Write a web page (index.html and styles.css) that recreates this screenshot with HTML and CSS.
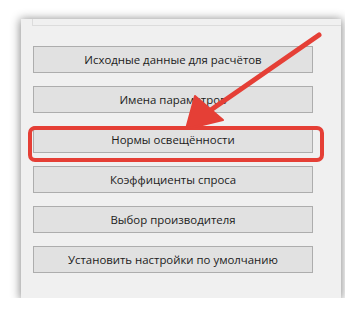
FILE: index.html
```html
<!DOCTYPE html>
<html lang="ru">
<head>
    <meta charset="UTF-8">
    <title>Настройки</title>
    <link rel="stylesheet" href="styles.css">
</head>
<body>
    <div class="window">
        <div class="groupbox"></div>
        <div class="buttons">
            <div class="btn">Исходные данные для расчётов</div>
            <div class="btn">Имена параметров</div>
            <div class="btn">Нормы освещённости</div>
            <div class="btn">Коэффициенты спроса</div>
            <div class="btn">Выбор производителя</div>
            <div class="btn">Установить настройки по умолчанию</div>
        </div>
    </div>
    <div class="highlight"></div>
    <svg class="arrow" width="345" height="319" viewBox="0 0 345 319">
        <line x1="319" y1="35" x2="205" y2="114" stroke="#e53f36" stroke-width="5" stroke-linecap="round"/>
        <polygon points="186,129 195,96 223,120" fill="#e53f36" stroke="#e53f36" stroke-width="2" stroke-linejoin="round"/>
    </svg>
</body>
</html>
```

FILE: styles.css
```css
body{
    margin: 0;
    background: #ffffff;
    font-family: "Segoe UI", "Open Sans", "Liberation Sans", sans-serif;
    font-size: 11.4px;
    color: #1b1b1b;
}

.window{
    width: 320px;
    height: 279px;
    margin: 19px 0 0 21px;
    background: #f0f0f0;
    box-shadow: 0 1px 9px 1px rgba(0,0,0,0.45);
}

.groupbox{
    height: 6px;
    margin-left: 11px;
    border-left: 1px solid #dcdcdc;
    border-bottom: 1px solid #dcdcdc;
}

.buttons{
    display: flex;
    flex-direction: column;
    gap: 13px;
    padding: 20px 0 0 12px;
}

.btn{
    width: 278px;
    height: 25px;
    line-height: 25px;
    text-align: center;
    background: #e1e1e1;
    border: 1px solid #adadad;
}

.highlight{
    position: absolute;
    left: 28px;
    top: 126px;
    width: 288px;
    height: 28px;
    border: 4px solid #e53f36;
    border-radius: 7px;
}

.arrow{
    position: absolute;
    left: 0;
    top: 0;
}
```
